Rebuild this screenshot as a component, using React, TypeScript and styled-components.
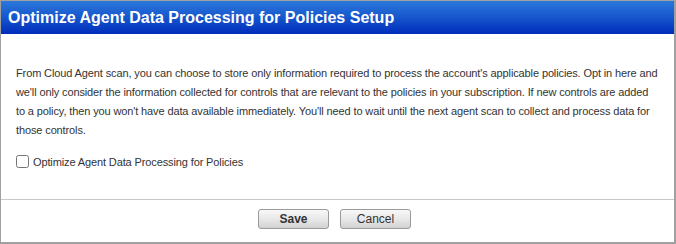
import React, { useState } from "react";
import styled, { createGlobalStyle } from "styled-components";

const GlobalStyle = createGlobalStyle`
  html, body {
    margin: 0;
    padding: 0;
    background: #fff;
  }
  body {
    font-family: "Liberation Sans", Arial, sans-serif;
  }
`;

const Dialog = styled.div`
  width: 676px;
  height: 244px;
  box-sizing: border-box;
  border: 1px solid #a0a0a0;
  border-right-width: 2px;
  border-bottom-width: 2px;
  display: flex;
  flex-direction: column;
  background: #fff;
`;

const Header = styled.div`
  height: 33px;
  background: linear-gradient(to bottom, #2a78dc 0%, #1656cc 50%, #002cbc 100%);
  display: flex;
  align-items: center;
  padding-left: 7px;
`;

const Title = styled.h1`
  margin: 0;
  font-size: 16px;
  font-weight: bold;
  color: #fff;
`;

const Body = styled.div`
  flex: 1;
  padding: 30px 10px 0 15px;
`;

const Text = styled.p`
  margin: 0;
  font-size: 11px;
  letter-spacing: -0.12px;
  line-height: 19px;
  color: #333;
  white-space: nowrap;
`;

const CheckRow = styled.label`
  display: flex;
  align-items: center;
  gap: 4px;
  margin-top: 15px;
  font-size: 11px;
  letter-spacing: -0.12px;
  color: #333;
  cursor: pointer;
`;

const Box = styled.input`
  margin: 0;
  width: 13px;
  height: 13px;
`;

const Footer = styled.div`
  height: 43px;
  border-top: 1px solid #c8c8c8;
  display: flex;
  justify-content: center;
  align-items: flex-start;
  gap: 11px;
  padding: 9px 6px 0 0;
  box-sizing: border-box;
`;

const Button = styled.button<{ $primary?: boolean }>`
  width: 71px;
  height: 20px;
  padding: 0;
  font-family: "Liberation Sans", Arial, sans-serif;
  font-size: 12px;
  font-weight: ${(p) => (p.$primary ? "bold" : "normal")};
  color: #333;
  border: 1px solid #9a9a9a;
  border-radius: 3px;
  background: linear-gradient(to bottom, #f8f8f8 0%, #e6e6e6 55%, #d2d2d2 100%);
  cursor: pointer;
`;

const lines = [
  "From Cloud Agent scan, you can choose to store only information required to process the account's applicable policies. Opt in here and",
  "we'll only consider the information collected for controls that are relevant to the policies in your subscription. If new controls are added",
  "to a policy, then you won't have data available immediately. You'll need to wait until the next agent scan to collect and process data for",
  "those controls.",
];

export default function App() {
  const [checked, setChecked] = useState(false);

  return (
    <>
      <GlobalStyle />
      <Dialog>
        <Header>
          <Title>Optimize Agent Data Processing for Policies Setup</Title>
        </Header>
        <Body>
          <Text>
            {lines.map((line, i) => (
              <React.Fragment key={i}>
                {line}
                {i < lines.length - 1 && <br />}
              </React.Fragment>
            ))}
          </Text>
          <CheckRow>
            <Box type="checkbox" checked={checked} onChange={(e) => setChecked(e.target.checked)} />
            Optimize Agent Data Processing for Policies
          </CheckRow>
        </Body>
        <Footer>
          <Button $primary>Save</Button>
          <Button>Cancel</Button>
        </Footer>
      </Dialog>
    </>
  );
}
